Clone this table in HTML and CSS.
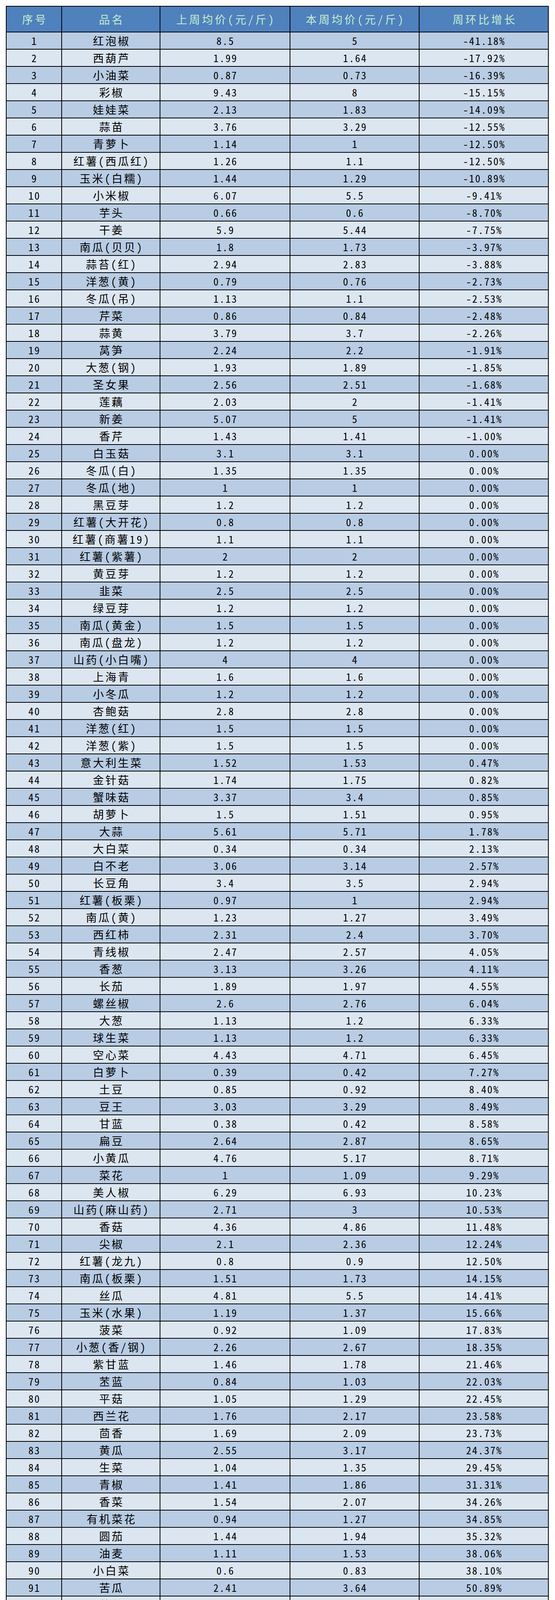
FILE: index.html
```html
<!DOCTYPE html>
<html lang="zh-CN">
<head>
<meta charset="utf-8">
<title>蔬菜周均价环比</title>
<link rel="stylesheet" href="styles.css">
</head>
<body>
<div class="page">
<table class="grid">
<thead>
<tr><th>序号</th><th>品名</th><th>上周均价(元/斤)</th><th>本周均价(元/斤)</th><th>周环比增长</th></tr>
</thead>
<tbody>
<tr><td>1</td><td class="name">红泡椒</td><td>8.5</td><td>5</td><td>-41.18%</td></tr>
<tr><td>2</td><td class="name">西葫芦</td><td>1.99</td><td>1.64</td><td>-17.92%</td></tr>
<tr><td>3</td><td class="name">小油菜</td><td>0.87</td><td>0.73</td><td>-16.39%</td></tr>
<tr><td>4</td><td class="name">彩椒</td><td>9.43</td><td>8</td><td>-15.15%</td></tr>
<tr><td>5</td><td class="name">娃娃菜</td><td>2.13</td><td>1.83</td><td>-14.09%</td></tr>
<tr><td>6</td><td class="name">蒜苗</td><td>3.76</td><td>3.29</td><td>-12.55%</td></tr>
<tr><td>7</td><td class="name">青萝卜</td><td>1.14</td><td>1</td><td>-12.50%</td></tr>
<tr><td>8</td><td class="name">红薯(西瓜红)</td><td>1.26</td><td>1.1</td><td>-12.50%</td></tr>
<tr><td>9</td><td class="name">玉米(白糯)</td><td>1.44</td><td>1.29</td><td>-10.89%</td></tr>
<tr><td>10</td><td class="name">小米椒</td><td>6.07</td><td>5.5</td><td>-9.41%</td></tr>
<tr><td>11</td><td class="name">芋头</td><td>0.66</td><td>0.6</td><td>-8.70%</td></tr>
<tr><td>12</td><td class="name">干姜</td><td>5.9</td><td>5.44</td><td>-7.75%</td></tr>
<tr><td>13</td><td class="name">南瓜(贝贝)</td><td>1.8</td><td>1.73</td><td>-3.97%</td></tr>
<tr><td>14</td><td class="name">蒜苔(红)</td><td>2.94</td><td>2.83</td><td>-3.88%</td></tr>
<tr><td>15</td><td class="name">洋葱(黄)</td><td>0.79</td><td>0.76</td><td>-2.73%</td></tr>
<tr><td>16</td><td class="name">冬瓜(吊)</td><td>1.13</td><td>1.1</td><td>-2.53%</td></tr>
<tr><td>17</td><td class="name">芹菜</td><td>0.86</td><td>0.84</td><td>-2.48%</td></tr>
<tr><td>18</td><td class="name">蒜黄</td><td>3.79</td><td>3.7</td><td>-2.26%</td></tr>
<tr><td>19</td><td class="name">莴笋</td><td>2.24</td><td>2.2</td><td>-1.91%</td></tr>
<tr><td>20</td><td class="name">大葱(钢)</td><td>1.93</td><td>1.89</td><td>-1.85%</td></tr>
<tr><td>21</td><td class="name">圣女果</td><td>2.56</td><td>2.51</td><td>-1.68%</td></tr>
<tr><td>22</td><td class="name">莲藕</td><td>2.03</td><td>2</td><td>-1.41%</td></tr>
<tr><td>23</td><td class="name">新姜</td><td>5.07</td><td>5</td><td>-1.41%</td></tr>
<tr><td>24</td><td class="name">香芹</td><td>1.43</td><td>1.41</td><td>-1.00%</td></tr>
<tr><td>25</td><td class="name">白玉菇</td><td>3.1</td><td>3.1</td><td>0.00%</td></tr>
<tr><td>26</td><td class="name">冬瓜(白)</td><td>1.35</td><td>1.35</td><td>0.00%</td></tr>
<tr><td>27</td><td class="name">冬瓜(地)</td><td>1</td><td>1</td><td>0.00%</td></tr>
<tr><td>28</td><td class="name">黑豆芽</td><td>1.2</td><td>1.2</td><td>0.00%</td></tr>
<tr><td>29</td><td class="name">红薯(大开花)</td><td>0.8</td><td>0.8</td><td>0.00%</td></tr>
<tr><td>30</td><td class="name">红薯(商薯19)</td><td>1.1</td><td>1.1</td><td>0.00%</td></tr>
<tr><td>31</td><td class="name">红薯(紫薯)</td><td>2</td><td>2</td><td>0.00%</td></tr>
<tr><td>32</td><td class="name">黄豆芽</td><td>1.2</td><td>1.2</td><td>0.00%</td></tr>
<tr><td>33</td><td class="name">韭菜</td><td>2.5</td><td>2.5</td><td>0.00%</td></tr>
<tr><td>34</td><td class="name">绿豆芽</td><td>1.2</td><td>1.2</td><td>0.00%</td></tr>
<tr><td>35</td><td class="name">南瓜(黄金)</td><td>1.5</td><td>1.5</td><td>0.00%</td></tr>
<tr><td>36</td><td class="name">南瓜(盘龙)</td><td>1.2</td><td>1.2</td><td>0.00%</td></tr>
<tr><td>37</td><td class="name">山药(小白嘴)</td><td>4</td><td>4</td><td>0.00%</td></tr>
<tr><td>38</td><td class="name">上海青</td><td>1.6</td><td>1.6</td><td>0.00%</td></tr>
<tr><td>39</td><td class="name">小冬瓜</td><td>1.2</td><td>1.2</td><td>0.00%</td></tr>
<tr><td>40</td><td class="name">杏鲍菇</td><td>2.8</td><td>2.8</td><td>0.00%</td></tr>
<tr><td>41</td><td class="name">洋葱(红)</td><td>1.5</td><td>1.5</td><td>0.00%</td></tr>
<tr><td>42</td><td class="name">洋葱(紫)</td><td>1.5</td><td>1.5</td><td>0.00%</td></tr>
<tr><td>43</td><td class="name">意大利生菜</td><td>1.52</td><td>1.53</td><td>0.47%</td></tr>
<tr><td>44</td><td class="name">金针菇</td><td>1.74</td><td>1.75</td><td>0.82%</td></tr>
<tr><td>45</td><td class="name">蟹味菇</td><td>3.37</td><td>3.4</td><td>0.85%</td></tr>
<tr><td>46</td><td class="name">胡萝卜</td><td>1.5</td><td>1.51</td><td>0.95%</td></tr>
<tr><td>47</td><td class="name">大蒜</td><td>5.61</td><td>5.71</td><td>1.78%</td></tr>
<tr><td>48</td><td class="name">大白菜</td><td>0.34</td><td>0.34</td><td>2.13%</td></tr>
<tr><td>49</td><td class="name">白不老</td><td>3.06</td><td>3.14</td><td>2.57%</td></tr>
<tr><td>50</td><td class="name">长豆角</td><td>3.4</td><td>3.5</td><td>2.94%</td></tr>
<tr><td>51</td><td class="name">红薯(板栗)</td><td>0.97</td><td>1</td><td>2.94%</td></tr>
<tr><td>52</td><td class="name">南瓜(黄)</td><td>1.23</td><td>1.27</td><td>3.49%</td></tr>
<tr><td>53</td><td class="name">西红柿</td><td>2.31</td><td>2.4</td><td>3.70%</td></tr>
<tr><td>54</td><td class="name">青线椒</td><td>2.47</td><td>2.57</td><td>4.05%</td></tr>
<tr><td>55</td><td class="name">香葱</td><td>3.13</td><td>3.26</td><td>4.11%</td></tr>
<tr><td>56</td><td class="name">长茄</td><td>1.89</td><td>1.97</td><td>4.55%</td></tr>
<tr><td>57</td><td class="name">螺丝椒</td><td>2.6</td><td>2.76</td><td>6.04%</td></tr>
<tr><td>58</td><td class="name">大葱</td><td>1.13</td><td>1.2</td><td>6.33%</td></tr>
<tr><td>59</td><td class="name">球生菜</td><td>1.13</td><td>1.2</td><td>6.33%</td></tr>
<tr><td>60</td><td class="name">空心菜</td><td>4.43</td><td>4.71</td><td>6.45%</td></tr>
<tr><td>61</td><td class="name">白萝卜</td><td>0.39</td><td>0.42</td><td>7.27%</td></tr>
<tr><td>62</td><td class="name">土豆</td><td>0.85</td><td>0.92</td><td>8.40%</td></tr>
<tr><td>63</td><td class="name">豆王</td><td>3.03</td><td>3.29</td><td>8.49%</td></tr>
<tr><td>64</td><td class="name">甘蓝</td><td>0.38</td><td>0.42</td><td>8.58%</td></tr>
<tr><td>65</td><td class="name">扁豆</td><td>2.64</td><td>2.87</td><td>8.65%</td></tr>
<tr><td>66</td><td class="name">小黄瓜</td><td>4.76</td><td>5.17</td><td>8.71%</td></tr>
<tr><td>67</td><td class="name">菜花</td><td>1</td><td>1.09</td><td>9.29%</td></tr>
<tr><td>68</td><td class="name">美人椒</td><td>6.29</td><td>6.93</td><td>10.23%</td></tr>
<tr><td>69</td><td class="name">山药(麻山药)</td><td>2.71</td><td>3</td><td>10.53%</td></tr>
<tr><td>70</td><td class="name">香菇</td><td>4.36</td><td>4.86</td><td>11.48%</td></tr>
<tr><td>71</td><td class="name">尖椒</td><td>2.1</td><td>2.36</td><td>12.24%</td></tr>
<tr><td>72</td><td class="name">红薯(龙九)</td><td>0.8</td><td>0.9</td><td>12.50%</td></tr>
<tr><td>73</td><td class="name">南瓜(板栗)</td><td>1.51</td><td>1.73</td><td>14.15%</td></tr>
<tr><td>74</td><td class="name">丝瓜</td><td>4.81</td><td>5.5</td><td>14.41%</td></tr>
<tr><td>75</td><td class="name">玉米(水果)</td><td>1.19</td><td>1.37</td><td>15.66%</td></tr>
<tr><td>76</td><td class="name">菠菜</td><td>0.92</td><td>1.09</td><td>17.83%</td></tr>
<tr><td>77</td><td class="name">小葱(香/钢)</td><td>2.26</td><td>2.67</td><td>18.35%</td></tr>
<tr><td>78</td><td class="name">紫甘蓝</td><td>1.46</td><td>1.78</td><td>21.46%</td></tr>
<tr><td>79</td><td class="name">苤蓝</td><td>0.84</td><td>1.03</td><td>22.03%</td></tr>
<tr><td>80</td><td class="name">平菇</td><td>1.05</td><td>1.29</td><td>22.45%</td></tr>
<tr><td>81</td><td class="name">西兰花</td><td>1.76</td><td>2.17</td><td>23.58%</td></tr>
<tr><td>82</td><td class="name">茴香</td><td>1.69</td><td>2.09</td><td>23.73%</td></tr>
<tr><td>83</td><td class="name">黄瓜</td><td>2.55</td><td>3.17</td><td>24.37%</td></tr>
<tr><td>84</td><td class="name">生菜</td><td>1.04</td><td>1.35</td><td>29.45%</td></tr>
<tr><td>85</td><td class="name">青椒</td><td>1.41</td><td>1.86</td><td>31.31%</td></tr>
<tr><td>86</td><td class="name">香菜</td><td>1.54</td><td>2.07</td><td>34.26%</td></tr>
<tr><td>87</td><td class="name">有机菜花</td><td>0.94</td><td>1.27</td><td>34.85%</td></tr>
<tr><td>88</td><td class="name">圆茄</td><td>1.44</td><td>1.94</td><td>35.32%</td></tr>
<tr><td>89</td><td class="name">油麦</td><td>1.11</td><td>1.53</td><td>38.06%</td></tr>
<tr><td>90</td><td class="name">小白菜</td><td>0.6</td><td>0.83</td><td>38.10%</td></tr>
<tr><td>91</td><td class="name">苦瓜</td><td>2.41</td><td>3.64</td><td>50.89%</td></tr>
<tr><td>92</td><td class="name">苦苣</td><td>1.5</td><td>2.36</td><td>57.14%</td></tr>
<tr><td>93</td><td class="name">茼蒿</td><td>1.6</td><td>3.1</td><td>93.75%</td></tr>
</tbody>
</table>
</div>
</body>
</html>
```
FILE: styles.css
```css
html, body {
  margin: 0;
  padding: 0;
  background: #ffffff;
}

body {
  font-family: "Noto Sans CJK SC", "Noto Sans", sans-serif;
  color: #000000;
}

.page {
  padding: 15px;
}

.grid {
  display: grid;
  grid-template-columns: 140px 250px 331px 329px 329px;
  grid-template-rows: 64px;
  grid-auto-rows: 42px;
  gap: 2px;
  padding: 2px;
  width: max-content;
  background: #000000;
  border: 0;
  border-spacing: 0;
}

.grid thead,
.grid tbody,
.grid tr {
  display: contents;
}

.grid th,
.grid td {
  display: flex;
  align-items: center;
  justify-content: center;
  box-sizing: border-box;
  padding: 0;
  white-space: nowrap;
  overflow: hidden;
  font-feature-settings: "hwid" 1;
}

.grid th {
  background: #4f81bd;
  color: #c6efce;
  font-size: 28px;
  line-height: 40px;
  font-weight: normal;
  letter-spacing: 5px;
  padding-left: 5px;
}

.grid td {
  font-size: 26px;
  line-height: 34px;
  letter-spacing: 2.5px;
  padding-left: 2.5px;
}

.grid td.name {
  font-size: 28px;
  letter-spacing: 4px;
  padding-left: 4px;
}

.grid tbody tr:nth-child(odd) td {
  background: #b8cce4;
}

.grid tbody tr:nth-child(even) td {
  background: #dce6f1;
}
```
